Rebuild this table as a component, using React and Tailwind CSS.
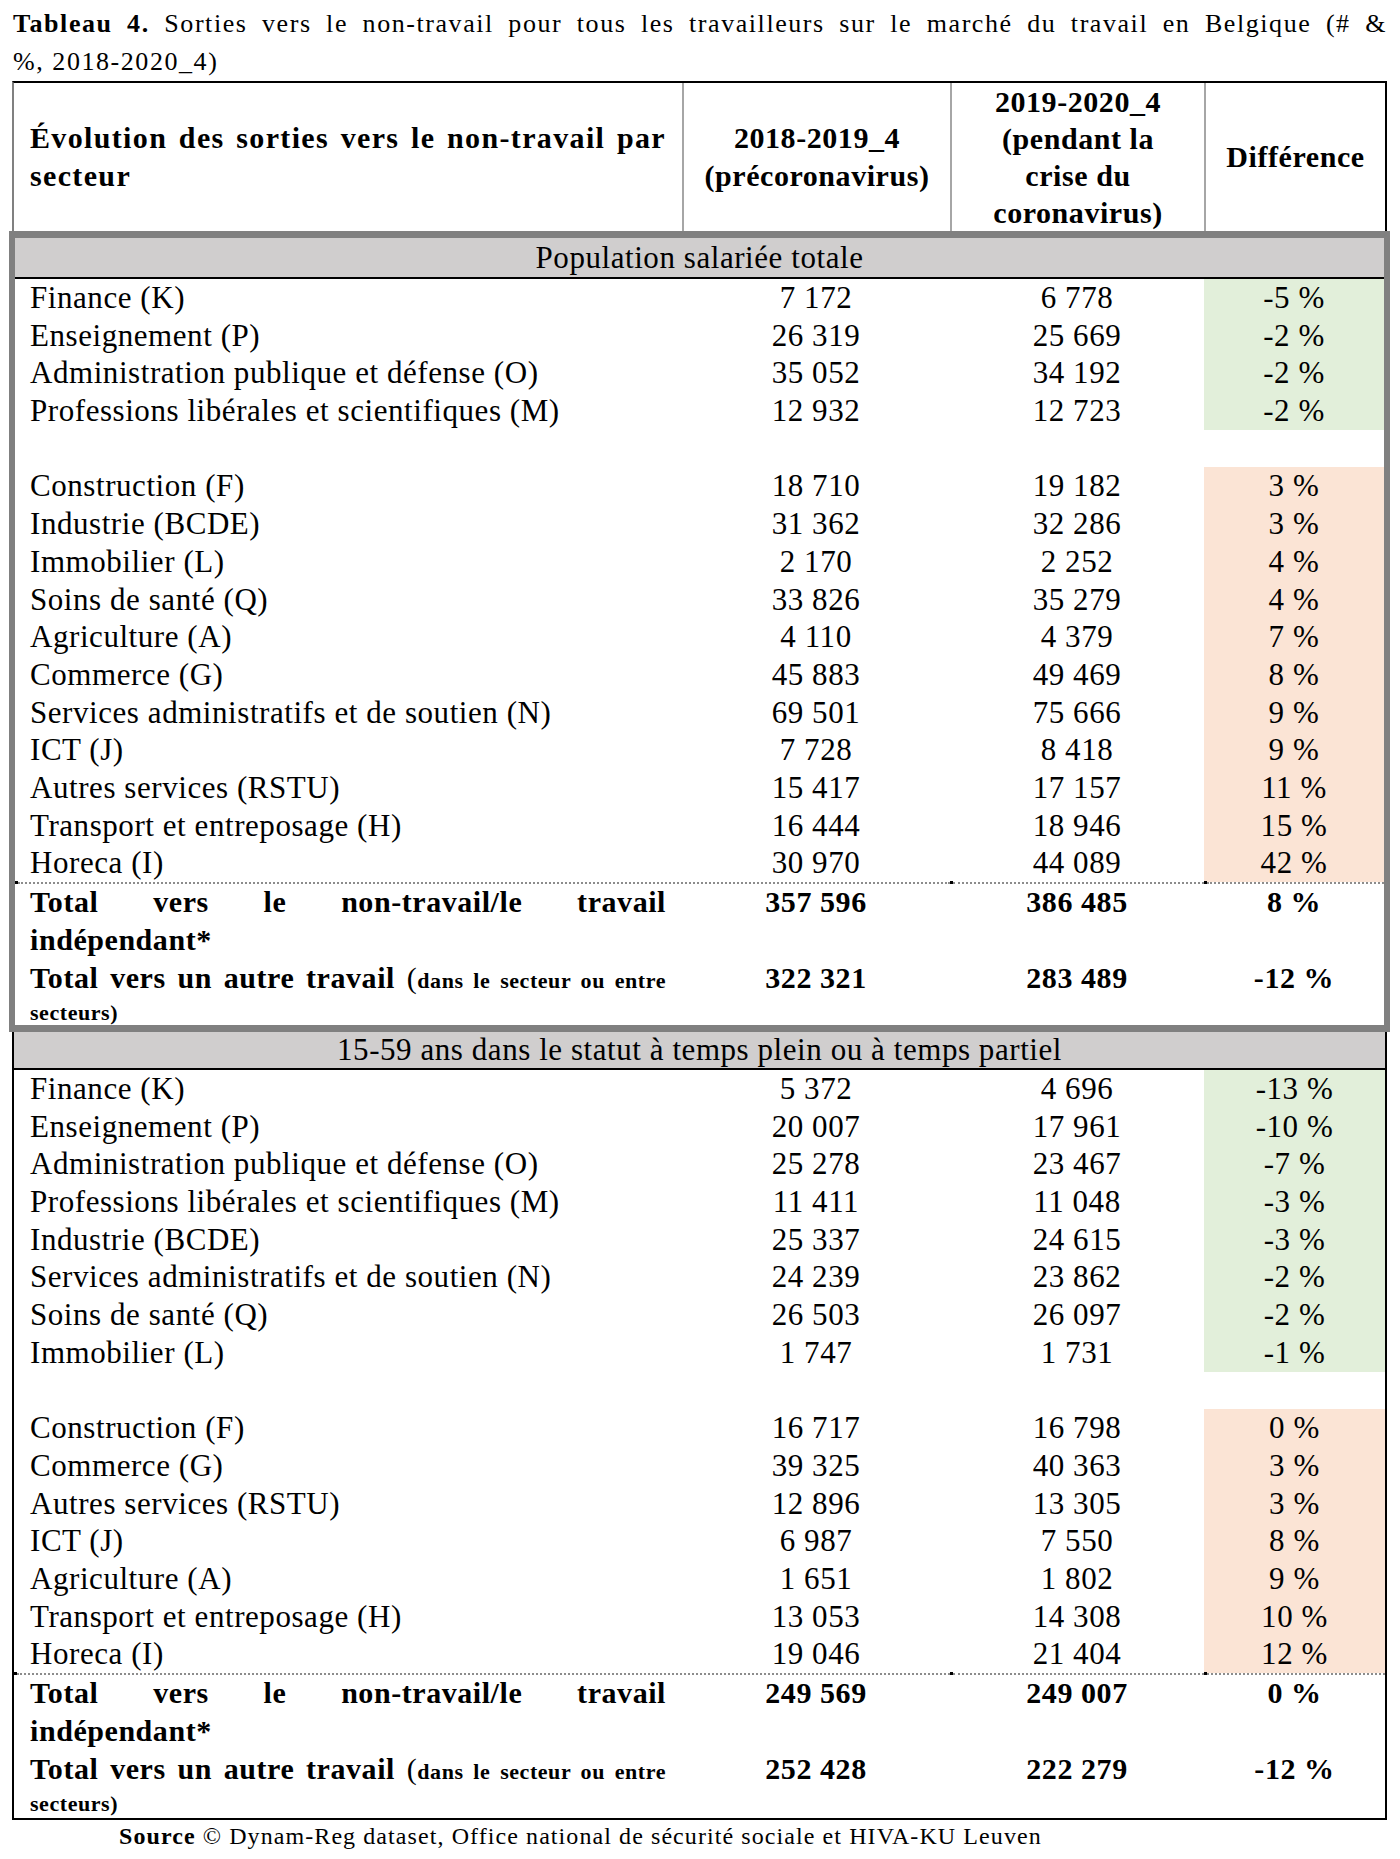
import React from 'react';

// Tableau 4 — sorties vers le non-travail, Belgique
const salaries = [
  ['Finance (K)', '7 172', '6 778', '-5 %', 'g'],
  ['Enseignement (P)', '26 319', '25 669', '-2 %', 'g'],
  ['Administration publique et défense (O)', '35 052', '34 192', '-2 %', 'g'],
  ['Professions libérales et scientifiques (M)', '12 932', '12 723', '-2 %', 'g'],
  null,
  ['Construction (F)', '18 710', '19 182', '3 %', 'r'],
  ['Industrie (BCDE)', '31 362', '32 286', '3 %', 'r'],
  ['Immobilier (L)', '2 170', '2 252', '4 %', 'r'],
  ['Soins de santé (Q)', '33 826', '35 279', '4 %', 'r'],
  ['Agriculture (A)', '4 110', '4 379', '7 %', 'r'],
  ['Commerce (G)', '45 883', '49 469', '8 %', 'r'],
  ['Services administratifs et de soutien (N)', '69 501', '75 666', '9 %', 'r'],
  ['ICT (J)', '7 728', '8 418', '9 %', 'r'],
  ['Autres services (RSTU)', '15 417', '17 157', '11 %', 'r'],
  ['Transport et entreposage (H)', '16 444', '18 946', '15 %', 'r'],
  ['Horeca (I)', '30 970', '44 089', '42 %', 'r'],
];

const jeunes = [
  ['Finance (K)', '5 372', '4 696', '-13 %', 'g'],
  ['Enseignement (P)', '20 007', '17 961', '-10 %', 'g'],
  ['Administration publique et défense (O)', '25 278', '23 467', '-7 %', 'g'],
  ['Professions libérales et scientifiques (M)', '11 411', '11 048', '-3 %', 'g'],
  ['Industrie (BCDE)', '25 337', '24 615', '-3 %', 'g'],
  ['Services administratifs et de soutien (N)', '24 239', '23 862', '-2 %', 'g'],
  ['Soins de santé (Q)', '26 503', '26 097', '-2 %', 'g'],
  ['Immobilier (L)', '1 747', '1 731', '-1 %', 'g'],
  null,
  ['Construction (F)', '16 717', '16 798', '0 %', 'r'],
  ['Commerce (G)', '39 325', '40 363', '3 %', 'r'],
  ['Autres services (RSTU)', '12 896', '13 305', '3 %', 'r'],
  ['ICT (J)', '6 987', '7 550', '8 %', 'r'],
  ['Agriculture (A)', '1 651', '1 802', '9 %', 'r'],
  ['Transport et entreposage (H)', '13 053', '14 308', '10 %', 'r'],
  ['Horeca (I)', '19 046', '21 404', '12 %', 'r'],
];

function DataRow({ row, cols, pad }) {
  const tone = row ? row[4] : null;
  const bg = tone === 'g' ? 'bg-[#e2efda]' : tone === 'r' ? 'bg-[#fbe4d5]' : '';
  return (
    <div className={`grid ${cols} h-[37.7px] items-center text-[31px]`}>
      <div className={pad}>{row ? row[0] : ''}</div>
      <div className="text-center">{row ? row[1] : ''}</div>
      <div className="text-center">{row ? row[2] : ''}</div>
      <div className={`h-full flex items-center justify-center ${bg}`}>{row ? row[3] : ''}</div>
    </div>
  );
}

function Dotted({ first }) {
  return (
    <div className="flex items-center h-px">
      <div className="w-[3px] h-[3px] bg-black" />
      <div className={`${first} border-t-2 border-dotted border-[#8c8c8c]`} />
      <div className="w-[3px] h-[3px] bg-black" />
      <div className="w-[251px] border-t-2 border-dotted border-[#8c8c8c]" />
      <div className="w-[3px] h-[3px] bg-black" />
      <div className="flex-1 border-t-2 border-dotted border-[#8c8c8c]" />
    </div>
  );
}

function Totals({ cols, pad, t1, t2 }) {
  return (
    <>
      <div className={`grid ${cols} font-bold`}>
        <div className={`${pad} pr-[16px]`}>
          <div className="text-justify [text-align-last:justify]">Total vers le non-travail/le travail</div>
          <div>indépendant*</div>
        </div>
        <div className="text-center">{t1[0]}</div>
        <div className="text-center">{t1[1]}</div>
        <div className="text-center">{t1[2]}</div>
      </div>
      <div className={`grid ${cols} font-bold`}>
        <div className={`${pad} pr-[16px]`}>
          <div className="text-justify [text-align-last:justify]">
            Total vers un autre travail <span className="font-normal">(</span>
            <span className="text-[22px]">dans le secteur ou entre</span>
          </div>
          <div className="text-[22px] leading-[25px]">secteurs)</div>
        </div>
        <div className="text-center">{t2[0]}</div>
        <div className="text-center">{t2[1]}</div>
        <div className="text-center">{t2[2]}</div>
      </div>
    </>
  );
}

export default function App() {
  const cols1 = 'grid-cols-[667px_268px_254px_180px]';
  const cols2 = 'grid-cols-[668px_268px_254px_181px]';

  return (
    <div className="w-[1400px] min-h-[1859px] bg-white text-black [font-family:'Liberation_Serif','Times_New_Roman',serif] tracking-[0.035em]">
      {/* Title */}
      <div className="pl-[13px] pr-[13px] pt-[5px] text-[26px] leading-[38px] tracking-[0.06em]">
        <div className="text-justify [text-align-last:justify]">
          <span className="font-bold">Tableau 4.</span> Sorties vers le non-travail pour tous les travailleurs sur le marché du travail en Belgique {'(# &'}
        </div>
        <div>%, 2018-2020_4)</div>
      </div>

      <div className="ml-[12px] w-[1375px] text-[30px] leading-[38px]">
        {/* Header */}
        <div className="grid grid-cols-[668px_268px_254px_181px] h-[150px] border-t-2 border-t-black border-l-2 border-l-[#808080] border-r-2 border-r-black font-bold">
          <div className="flex flex-col justify-center pl-[16px] pr-[16px] tracking-[0.045em]">
            <div className="text-justify [text-align-last:justify]">Évolution des sorties vers le non-travail par</div>
            <div>secteur</div>
          </div>
          <div className="flex flex-col items-center justify-center border-l-2 border-[#a6a6a6] text-center">
            <div>2018-2019_4</div>
            <div>(précoronavirus)</div>
          </div>
          <div className="flex flex-col items-center justify-center border-l-2 border-[#a6a6a6] text-center leading-[37px]">
            <div>2019-2020_4</div>
            <div>(pendant la</div>
            <div>crise du</div>
            <div>coronavirus)</div>
          </div>
          <div className="flex items-center justify-center border-l-2 border-[#a6a6a6]">Différence</div>
        </div>

        {/* Population salariée totale */}
        <div className="-mx-[3px] border-x-[6px] border-t-[7px] border-b-[7px] border-[#808080]">
          <div className="h-[41px] bg-[#d0cece] border-b-2 border-black flex items-center justify-center text-[31px]">
            Population salariée totale
          </div>
          {salaries.map((r, i) => (
            <DataRow key={i} row={r} cols={cols1} pad="pl-[15px]" />
          ))}
          <Dotted first="w-[932px]" />
          <Totals cols={cols1} pad="pl-[15px]" t1={['357 596', '386 485', '8 %']} t2={['322 321', '283 489', '-12 %']} />
        </div>

        {/* 15-59 ans */}
        <div className="border-x-2 border-b-2 border-black pb-[2px]">
          <div className="h-[38px] bg-[#d0cece] border-b-2 border-black flex items-center justify-center text-[31px]">
            15-59 ans dans le statut à temps plein ou à temps partiel
          </div>
          {jeunes.map((r, i) => (
            <DataRow key={i} row={r} cols={cols2} pad="pl-[16px]" />
          ))}
          <Dotted first="w-[933px]" />
          <Totals cols={cols2} pad="pl-[16px]" t1={['249 569', '249 007', '0 %']} t2={['252 428', '222 279', '-12 %']} />
        </div>
      </div>

      <div className="pl-[119px] text-[24px] leading-[33px] tracking-[0.045em]">
        <span className="font-bold">Source</span> © Dynam-Reg dataset, Office national de sécurité sociale et HIVA-KU Leuven
      </div>
    </div>
  );
}
